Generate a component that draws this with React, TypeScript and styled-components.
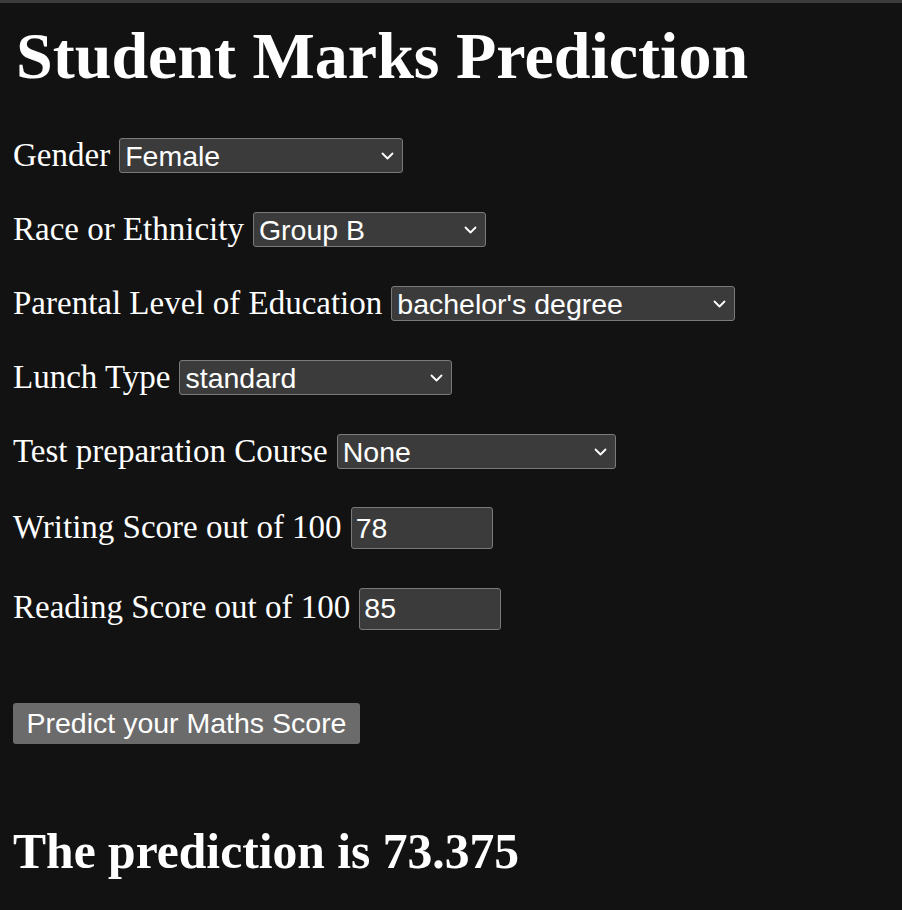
import React from "react";
import styled, { createGlobalStyle } from "styled-components";

const Global = createGlobalStyle`
  html, body {
    margin: 0;
    padding: 0;
    background: #121212;
    color: #ffffff;
  }
  body {
    font-family: "Liberation Serif", "Times New Roman", serif;
  }
`;

const TopBar = styled.div`
  height: 3px;
  background: #3c3c3c;
`;

const Page = styled.main`
  padding: 0 13px 0 13px;
  height: 907px;
  box-sizing: border-box;
  display: flex;
  flex-direction: column;
`;

const Title = styled.h1`
  margin: 16px 0 0 3px;
  font-size: 66px;
  line-height: 74px;
  font-weight: 700;
  white-space: nowrap;
`;

const Form = styled.form`
  display: flex;
  flex-direction: column;
  gap: 37.5px;
  margin-top: 43.6px;
`;

const Row = styled.div<{ $offset?: number }>`
  display: flex;
  align-items: baseline;
  gap: 9px;
  margin-top: ${(p) => p.$offset ?? 0}px;
`;

const Label = styled.label`
  font-size: 33px;
  line-height: 36px;
  white-space: nowrap;
`;

const SelectWrap = styled.span`
  position: relative;
  display: inline-flex;
`;

const Select = styled.select<{ $w: number }>`
  appearance: none;
  -webkit-appearance: none;
  box-sizing: border-box;
  width: ${(p) => p.$w}px;
  height: 35px;
  margin: 0;
  padding: 0 24px 0 5px;
  font-family: "Liberation Sans", Arial, sans-serif;
  font-size: 28.5px;
  color: #ffffff;
  background: #3b3b3b;
  border: 1px solid #7a7a7a;
  border-radius: 3px;
  outline: none;
`;

const Chevron = styled.svg`
  position: absolute;
  right: 9px;
  top: 50%;
  width: 13px;
  height: 8px;
  margin-top: -4px;
  pointer-events: none;
`;

const NumberInput = styled.input`
  box-sizing: border-box;
  width: 142px;
  height: 42px;
  margin: 0;
  padding: 0 4px;
  font-family: "Liberation Sans", Arial, sans-serif;
  font-size: 28.5px;
  color: #ffffff;
  background: #3b3b3b;
  border: 1px solid #7a7a7a;
  border-radius: 3px;
  outline: none;
`;

const ButtonRow = styled.div`
  margin-top: 36.3px;
`;

const SubmitButton = styled.button`
  box-sizing: border-box;
  width: 347px;
  height: 41px;
  padding: 0;
  font-family: "Liberation Sans", Arial, sans-serif;
  font-size: 28.5px;
  color: #ffffff;
  background: #6b6b6b;
  border: none;
  border-radius: 3px;
  text-align: center;
`;

const Result = styled.h2`
  margin: 79.4px 0 0 0;
  font-size: 49.6px;
  line-height: 56px;
  font-weight: 700;
  white-space: nowrap;
`;

type SelectField = { label: string; value: string; options: string[]; width: number };

const selects: SelectField[] = [
  { label: "Gender", value: "Female", options: ["Female", "Male"], width: 284 },
  {
    label: "Race or Ethnicity",
    value: "Group B",
    options: ["Group A", "Group B", "Group C", "Group D", "Group E"],
    width: 233,
  },
  {
    label: "Parental Level of Education",
    value: "bachelor's degree",
    options: [
      "associate's degree",
      "bachelor's degree",
      "high school",
      "master's degree",
      "some college",
      "some high school",
    ],
    width: 344,
  },
  { label: "Lunch Type", value: "standard", options: ["free/reduced", "standard"], width: 273 },
  { label: "Test preparation Course", value: "None", options: ["None", "Completed"], width: 279 },
];

const ChevronIcon = () => (
  <Chevron viewBox="0 0 13 8" fill="none">
    <path d="M1.5 1.5 L6.5 6.5 L11.5 1.5" stroke="#ffffff" strokeWidth="1.8" strokeLinecap="round" strokeLinejoin="round" />
  </Chevron>
);

export default function App() {
  return (
    <>
      <Global />
      <TopBar />
      <Page>
        <Title>Student Marks Prediction</Title>
        <Form onSubmit={(e) => e.preventDefault()}>
          {selects.map((f) => (
            <Row key={f.label}>
              <Label>{f.label}</Label>
              <SelectWrap>
                <Select $w={f.width} defaultValue={f.value}>
                  {f.options.map((o) => (
                    <option key={o} value={o}>
                      {o}
                    </option>
                  ))}
                </Select>
                <ChevronIcon />
              </SelectWrap>
            </Row>
          ))}
          <Row $offset={0.8}>
            <Label>Writing Score out of 100</Label>
            <NumberInput type="text" defaultValue="78" />
          </Row>
          <Row $offset={0.8}>
            <Label>Reading Score out of 100</Label>
            <NumberInput type="text" defaultValue="85" />
          </Row>
          <ButtonRow>
            <SubmitButton type="submit">Predict your Maths Score</SubmitButton>
          </ButtonRow>
        </Form>
        <Result>The prediction is 73.375</Result>
      </Page>
    </>
  );
}
